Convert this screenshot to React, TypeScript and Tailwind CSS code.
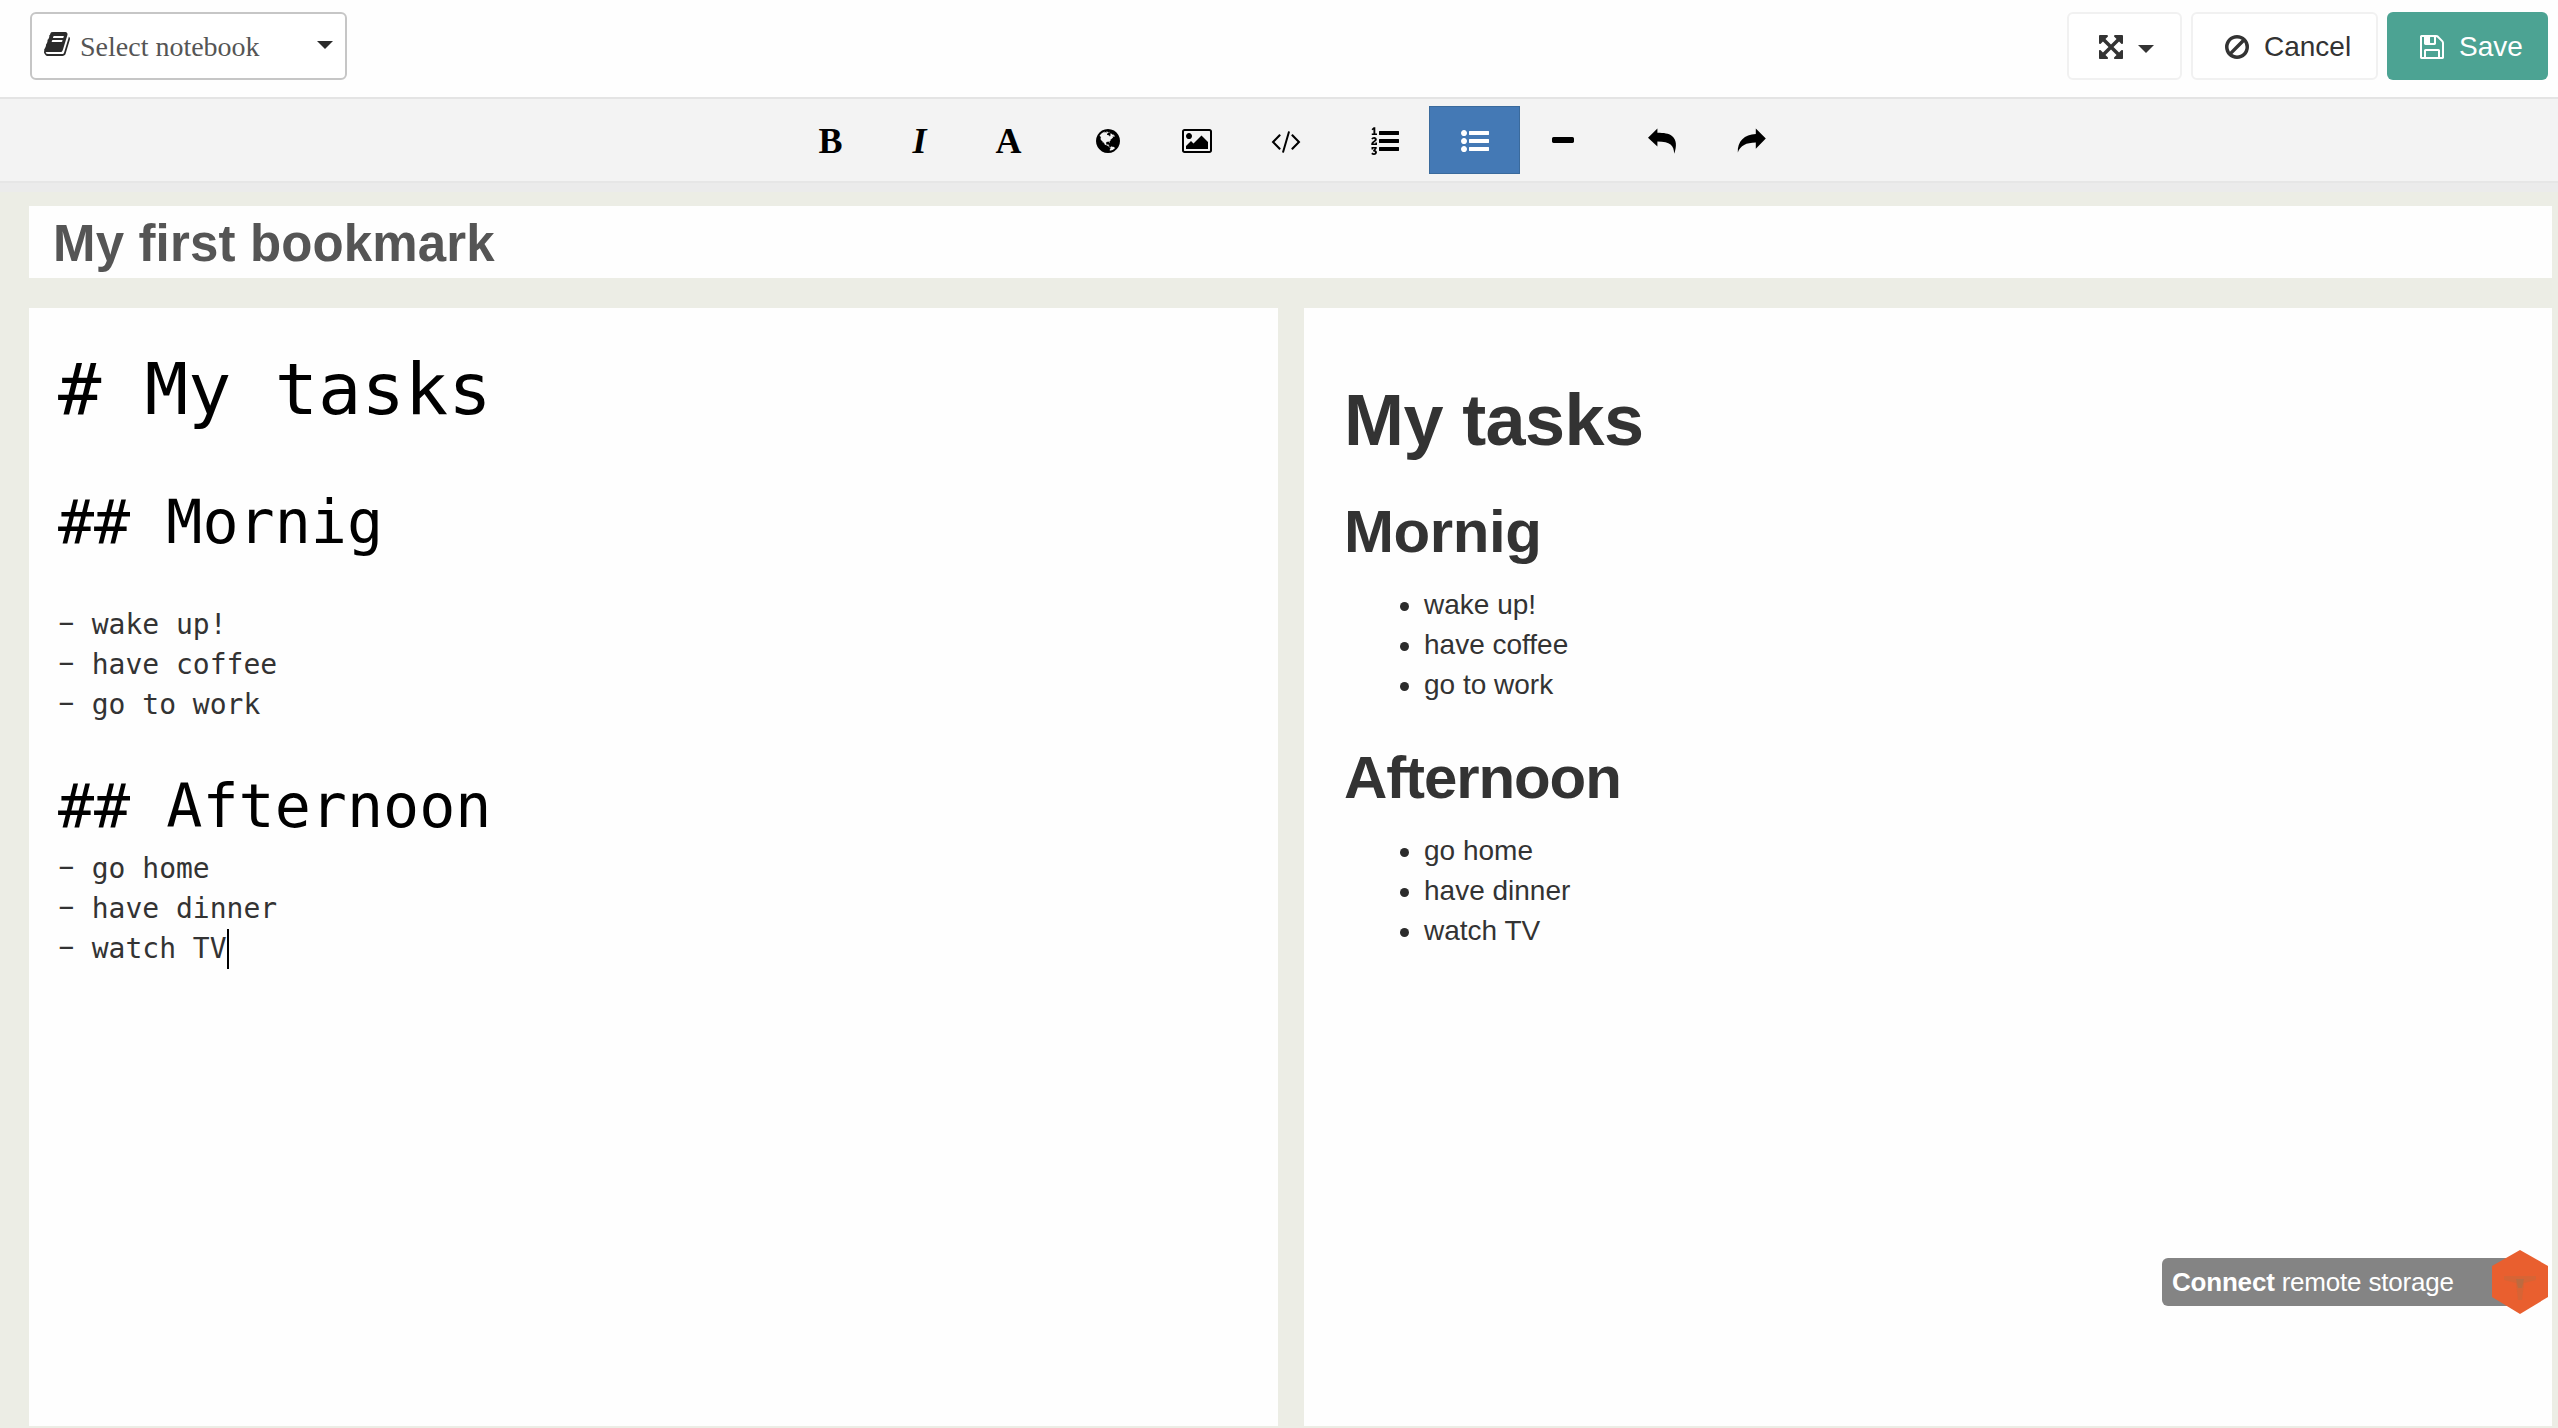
import React from "react";

type IconProps = { d: string; className?: string; viewBox?: string };

function Icon({ d, className = "h-7 w-7", viewBox = "0 0 1792 1792" }: IconProps) {
  return (
    <svg viewBox={viewBox} className={`shrink-0 ${className}`} fill="currentColor" aria-hidden="true">
      <path d={d} />
    </svg>
  );
}

const BOOK =
  "M1703 478q40 57 18 129l-275 906q-19 64-76.5 107.5t-122.5 43.5h-923q-77 0-148.5-53.5t-99.5-131.5q-24-67-2-127 0-4 3-27t4-37q1-8-3-21.5t-3-19.5q2-11 8-21t16.5-23.5 16.5-23.5q23-38 45-91.5t30-91.5q3-10 .5-30t-.5-28q3-11 17-28t17-23q21-36 42-92t25-90q1-9-2.5-32t.5-28q4-13 22-30.5t22-22.5q19-26 42.5-84.5t27.5-96.5q1-8-3-25.5t-2-26.5q2-8 9-18t18-23 17-21q8-12 16.5-30.5t15-35 16-36 19.5-32 26.5-23.5 36-11.5 47.5 5.5l-1 3q38-9 51-9h761q74 0 114 56t18 130l-274 906q-36 119-71.5 153.5t-128.5 34.5h-869q-27 0-38 15-11 16-1 43 24 70 144 70h923q29 0 56-15.5t35-41.5l300-987q7-22 5-57 38 15 59 43zm-1064 2q-4 13 2 22.5t20 9.5h608q13 0 25.5-9.5t16.5-22.5l21-64q4-13-2-22.5t-20-9.5h-608q-13 0-25.5 9.5t-16.5 22.5zm-83 256q-4 13 2 22.5t20 9.5h608q13 0 25.5-9.5t16.5-22.5l21-64q4-13-2-22.5t-20-9.5h-608q-13 0-25.5 9.5t-16.5 22.5z";
const ARROWS =
  "M1411 541l-355 355 355 355 144-144q29-31 70-14 39 17 39 59v448q0 26-19 45t-45 19h-448q-42 0-59-40-17-39 14-69l144-144-355-355-355 355 144 144q31 30 14 69-17 40-59 40h-448q-26 0-45-19t-19-45v-448q0-42 40-59 39-17 69 14l144 144 355-355-355-355-144 144q-19 19-45 19-12 0-24-5-40-17-40-59v-448q0-26 19-45t45-19h448q42 0 59 40 17 39-14 69l-144 144 355 355 355-355-144-144q-31-30-14-69 17-40 59-40h448q26 0 45 19t19 45v448q0 42-39 59-13 5-25 5-26 0-45-19z";
const BAN =
  "M1440 893q0-161-87-295l-754 753q137 89 297 89 111 0 211.5-43.5t173.5-116.5 116-174.5 43-212.5zm-999 299l755-754q-135-91-300-91-148 0-273 73t-198 199-73 274q0 162 89 299zm1223-299q0 157-61 300t-163.5 246-245 164-298.5 61-298.5-61-245-164-163.5-246-61-300 61-299.5 163.5-245.5 245-164 298.5-61 298.5 61 245 164 163.5 245.5 61 299.5z";
const FLOPPY =
  "M512 1536h768v-384h-768v384zm896 0h128v-896q0-14-10-38.5t-20-34.5l-281-281q-10-10-34-20t-39-10v416q0 40-28 68t-68 28h-576q-40 0-68-28t-28-68v-416h-128v1280h128v-416q0-40 28-68t68-28h832q40 0 68 28t28 68v416zm-384-928v-320q0-13-9.5-22.5t-22.5-9.5h-192q-13 0-22.5 9.5t-9.5 22.5v320q0 13 9.5 22.5t22.5 9.5h192q13 0 22.5-9.5t9.5-22.5zm640 32v928q0 40-28 68t-68 28h-1344q-40 0-68-28t-28-68v-1344q0-40 28-68t68-28h928q40 0 88 20t76 48l280 280q28 28 48 76t20 88z";
const GLOBE =
  "M896 128q209 0 385.5 103t279.5 279.5 103 385.5-103 385.5-279.5 279.5-385.5 103-385.5-103-279.5-279.5-103-385.5 103-385.5 279.5-279.5 385.5-103zm274 521q-2 1-9.5 9.5t-13.5 9.5q2 0 4.5-5t5-11 3.5-7q6-7 22-15 14-6 52-12 34-8 51 11-2-2 9.5-13t14.5-12q3-2 15-4.5t15-7.5l2-22q-12 1-17.5-7t-6.5-21q0 2-6 8 0-7-4.5-8t-11.5 1-9 1q-10-3-15-7.5t-8-16.5-4-15q-2-5-9.5-11t-9.5-10q-1-2-2.5-5.5t-3-6.5-4-5.5-5.5-2.5-7 5-7.5 10-4.5 5q-3-2-6-1.5t-4.5 1-4.5 3-5 3.5q-3 2-8.5 3t-8.5 2q15-5-1-11-10-4-16-3 9-4 7.5-12t-8.5-14h5q-1-4-8.5-8.5t-17.5-8.5-13-6q-8-5-34-9.5t-33-.5q-5 6-4.5 10.5t4 14 3.5 12.5q1 6-5.5 13t-6.5 12q0 7 14 15.5t10 21.5q-3 8-16 16t-16 12q-5 8-1.5 18.5t10.5 16.5q2 2 1.5 4t-3.5 4.5-5.5 4-6.5 3.5l-3 2q-11 5-20.5-6t-13.5-26q-7-25-16-30-23-8-29 1-5-13-41-26-25-9-58-4 6-1 0-15-7-15-19-12 3-6 4-17.5t1-13.5q3-13 12-23 1-1 7-8.5t9.5-13.5.5-6q35 4 50-11 5-5 11.5-17t10.5-17q9-6 14-5.5t14.5 5.5 14.5 5q14 1 15.5-11t-7.5-20q12 1 3-17-4-7-8-9-12-4-27 5-8 4 2 8-1-1-9.5 10.5t-16.5 17.5-16-5q-1-1-5.5-13.5t-9.5-13.5q-8 0-16 15 3-8-11-15t-24-8q19-12-8-27-7-4-20.5-5t-19.5 4q-5 7-5.5 11.5t5 8 10.5 5.5 11.5 4 8.5 3q14 10 8 14-2 1-8.5 3.5t-11.5 4.5-6 4q-3 4 0 14t-2 14q-5-5-9-17.5t-7-16.5q7 9-25 6l-10-1q-4 0-16 2t-20.5 1-13.5-8q-4-8 0-20 1-4 4-2-4-3-11-9.5t-10-8.5q-46 15-94 41 6 1 12-1 5-2 13-6.5t10-5.5q34-14 42-7l5-5q14 16 20 25-7-4-30-1-20 6-22 12 7 12 5 18-4-3-11.5-10t-14.5-11-15-5q-16 0-22 1-146 80-235 222 7 7 12 8 4 1 5 9t2.5 11 11.5-3q9 8 3 19 1-1 44 27 19 17 21 21 3 11-10 18-1-2-9-9t-9-4q-3 5 .5 18.5t10.5 12.5q-7 0-9.5 16t-2.5 35.5-1 23.5l2 1q-3 12 5.5 34.5t21.5 19.5q-13 3 20 43 6 8 8 9 3 2 12 7.5t15 10 10 10.5q4 5 10 22.5t14 23.5q-2 6 9.5 20t10.5 23q-1 0-2.5 1t-2.5 1q3 7 15.5 14t15.5 13q1 3 2 10t3 11 8 2q2-20-24-62-15-25-17-29-3-5-5.5-15.5t-4.5-14.5q2 0 6 1.5t8.5 3.5 7.5 4 2 3q-3 7 2 17.5t12 18.5 17 19 12 13q6 6 14 19.5t0 13.5q9 0 20 10t17 20q5 8 8 26t5 24q2 7 8.5 13.5t12.5 9.5l16 8 13 7q5 2 18.5 10.5t21.5 11.5q10 4 16 4t14.5-2.5 13.5-3.5q15-2 29 15t21 21q36 19 55 11-2 1 .5 7.5t8 15.5 9 14.5 5.5 8.5q5 6 18 15t18 15q6-4 7-9-3 8 7 20t18 10q14-3 14-32-31 15-49-18 0-1-2.5-5.5t-4-8.5-2.5-8.5 0-7.5 5-3q9 0 10-3.5t-2-12.5-4-13q-1-8-11-20t-12-15q-5 9-16 8t-16-9q0 1-1.5 5.5t-1.5 6.5q-13 0-15-1 1-3 2.5-17.5t3.5-22.5q1-4 5.5-12t7.5-14.5 4-12.5-4.5-9.5-17.5-2.5q-19 1-26 20-1 3-3 10.5t-5 11.5-9 7q-7 3-24 2t-24-5q-13-8-22.5-29t-9.5-37q0-10 2.5-26.5t3-25-5.5-24.5q3-2 9-9.5t10-10.5q2-1 4.5-1.5t4.5 0 4-1.5 3-6q-1-1-4-3-3-3-4-3 7 3 28.5-1.5t27.5 1.5q15 11 22-2 0-1-2.5-9.5t-.5-13.5q5 27 29 9 3 3 15.5 5t17.5 5q3 2 7 5.5t5.5 4.5 5-.5 8.5-6.5q10 14 12 24 11 40 19 44 7 3 11 2t4.5-9.5 0-14-1.5-12.5l-1-8v-18l-1-8q-15-3-18.5-12t1.5-18.5 15-18.5q1-1 8-3.5t15.5-6.5 12.5-8q21-19 15-35 7 0 11-9-1 0-5-3t-7.5-5-4.5-2q9-5 2-16 5-3 7.5-11t7.5-10q9 12 21 2 8-8 1-16 5-7 20.5-10.5t18.5-9.5q7 2 8-2t1-12 3-12q4-5 15-9t13-5l17-11q3-4 0-4 18 2 31-11 10-11-6-20 3-6-3-9.5t-15-5.5q3-1 11.5-.5t10.5-1.5q15-10-7-16-17-5-43 12zm-163 877q206-36 351-189-3-3-12.5-4.5t-12.5-3.5q-18-7-24-8 1-7-2.5-13t-8-9-12.5-8-11-7q-2-2-7-6t-7-5.5-7.5-4.5-8.5-2-10 1l-3 1q-3 1-5.5 2.5t-5.5 3-4 3 0 2.5q-21-17-36-22-5-1-11-5.5t-10.5-7-10-1.5-11.5 7q-5 5-6 15t-2 13q-7-5 0-17.5t2-18.5q-3-6-10.5-4.5t-12 4.5-11.5 8.5-9 6.5-8.5 5.5-8.5 7.5q-3 4-6 12t-5 11q-2-4-11.5-6.5t-9.5-5.5q2 10 4 35t5 38q7 31-12 48-27 25-29 40-4 22 12 26 0 7-8 20.5t-7 21.5q0 6 2 16z";
const IMAGE =
  "M576 576q0 80-56 136t-136 56-136-56-56-136 56-136 136-56 136 56 56 136zm1024 384v448h-1408v-192l320-320 160 160 512-512zm96-704h-1600q-13 0-22.5 9.5t-9.5 22.5v1216q0 13 9.5 22.5t22.5 9.5h1600q13 0 22.5-9.5t9.5-22.5v-1216q0-13-9.5-22.5t-22.5-9.5zm160 32v1216q0 66-47 113t-113 47h-1600q-66 0-113-47t-47-113v-1216q0-66 47-113t113-47h1600q66 0 113 47t47 113z";
const CODE =
  "M553 1399l-50 50q-10 10-23 10t-23-10l-466-466q-10-10-10-23t10-23l466-466q10-10 23-10t23 10l50 50q10 10 10 23t-10 23l-393 393 393 393q10 10 10 23t-10 23zm591-1067l-373 1291q-4 13-15.5 19.5t-23.5 2.5l-62-17q-13-4-19.5-15.5t-2.5-24.5l373-1291q4-13 15.5-19.5t23.5-2.5l62 17q13 4 19.5 15.5t2.5 24.5zm657 651l-466 466q-10 10-23 10t-23-10l-50-50q-10-10-10-23t10-23l393-393-393-393q-10-10-10-23t10-23l50-50q10-10 23-10t23 10l466 466q10 10 10 23t-10 23z";
const LIST_OL =
  "M381 1620q0 80-54.5 126t-135.5 46q-106 0-172-66l57-88q49 45 106 45 29 0 50.5-14.5t21.5-42.5q0-64-105-56l-26-56q8-10 32.5-43.5t42.5-54 37-38.5v-1q-16 0-48.5 1t-48.5 1v53h-106v-152h333v88l-95 115q51 12 81 49t30 88zm2-627v159h-362q-6-36-6-54 0-51 23.5-93t56.5-68 66-47.5 56.5-43.5 23.5-45q0-25-14.5-38.5t-39.5-13.5q-46 0-81 58l-85-59q24-51 71.5-79.5t105.5-28.5q73 0 123 41.5t50 112.5q0 50-34 91.5t-75 64.5-75.5 50.5-35.5 52.5h127v-60h105zm1409 319v192q0 13-9.5 22.5t-22.5 9.5h-1216q-13 0-22.5-9.5t-9.5-22.5v-192q0-14 9-23t23-9h1216q13 0 22.5 9.5t9.5 22.5zm-1408-899v99h-335v-99h107q0-41 .5-121.5t.5-121.5v-12h-2q-8 17-50 54l-71-76 136-127h106v404h108zm1408 387v192q0 13-9.5 22.5t-22.5 9.5h-1216q-13 0-22.5-9.5t-9.5-22.5v-192q0-14 9-23t23-9h1216q13 0 22.5 9.5t9.5 22.5zm0-512v192q0 13-9.5 22.5t-22.5 9.5h-1216q-13 0-22.5-9.5t-9.5-22.5v-192q0-13 9.5-22.5t22.5-9.5h1216q13 0 22.5 9.5t9.5 22.5z";
const LIST_UL =
  "M384 1408q0 80-56 136t-136 56-136-56-56-136 56-136 136-56 136 56 56 136zm0-512q0 80-56 136t-136 56-136-56-56-136 56-136 136-56 136 56 56 136zm1408 416v192q0 13-9.5 22.5t-22.5 9.5h-1216q-13 0-22.5-9.5t-9.5-22.5v-192q0-13 9.5-22.5t22.5-9.5h1216q13 0 22.5 9.5t9.5 22.5zm-1408-928q0 80-56 136t-136 56-136-56-56-136 56-136 136-56 136 56 56 136zm1408 416v192q0 13-9.5 22.5t-22.5 9.5h-1216q-13 0-22.5-9.5t-9.5-22.5v-192q0-13 9.5-22.5t22.5-9.5h1216q13 0 22.5 9.5t9.5 22.5zm0-512v192q0 13-9.5 22.5t-22.5 9.5h-1216q-13 0-22.5-9.5t-9.5-22.5v-192q0-13 9.5-22.5t22.5-9.5h1216q13 0 22.5 9.5t9.5 22.5z";
const MINUS =
  "M1600 736v192q0 40-28 68t-68 28h-1216q-40 0-68-28t-28-68v-192q0-40 28-68t68-28h1216q40 0 68 28t28 68z";
// Curved arrows on a 29 x 26 grid.
const UNDO =
  "M0 9.8L9.4 .4V4.8C16 4.8 20.5 5.4 24 8C28.6 11.6 29 18 26.2 25.8C25.8 17 22.5 13.6 9.4 13.4V18.6Z";
const REDO =
  "M28.8 10.6L18.8 .6V6C7.5 6.6 .2 13 .8 24.6C3.6 17.4 9 14.8 18.8 14.6V20.8Z";

function Caret({ className = "" }: { className?: string }) {
  return (
    <svg viewBox="0 0 16 8" className={`h-2 w-4 shrink-0 ${className}`} fill="currentColor" aria-hidden="true">
      <path d="M0 0H16L8 8Z" />
    </svg>
  );
}

function Tool({ children, active = false }: { children: React.ReactNode; active?: boolean }) {
  return (
    <button
      className={
        active
          ? "flex h-[68px] w-[91px] items-center justify-center border border-[#3a6a9c] bg-[#4479b5] pt-[2px] text-white"
          : "flex h-[68px] w-[89px] items-center justify-center pt-[2px] text-black"
      }
    >
      {children}
    </button>
  );
}

const letter = "font-['Liberation_Serif',serif] text-[36px] leading-[40px] font-bold";

function Header() {
  return (
    <header className="flex h-[97px] items-start justify-between bg-[#fefefe] pt-3 pr-2.5 pl-[30px]">
      <button className="flex h-[68px] w-[317px] items-center rounded-md border-2 border-[#c6c6c6] bg-white pr-[12px] pl-[11px] text-[#555]">
        <Icon d={BOOK} className="-mt-1 h-7 w-7 text-[#2b2b2b]" />
        <span className="ml-[9px] flex-1 pt-[2px] text-left font-['Liberation_Serif',serif] text-[28px] leading-[40px]">
          Select notebook
        </span>
        <Caret className="-mt-[2px] text-[#2b2b2b]" />
      </button>
      <div className="flex gap-[9px] text-[28px] leading-[40px] text-[#333]">
        <button className="flex h-[68px] w-[115px] items-center rounded-md border-2 border-[#f1f1f1] bg-white pt-[2px] pl-[28px]">
          <Icon d={ARROWS} className="h-7 w-7" />
          <Caret className="mt-[3px] ml-[13px]" />
        </button>
        <button className="flex h-[68px] w-[187px] items-center rounded-md border-2 border-[#f1f1f1] bg-white pt-[2px] pl-[30px]">
          <Icon d={BAN} className="h-7 w-7" />
          <span className="ml-[13px]">Cancel</span>
        </button>
        <button className="flex h-[68px] w-[161px] items-center rounded-md bg-[#4ca393] pt-[2px] pl-[31px] text-white">
          <Icon d={FLOPPY} className="h-7 w-7" />
          <span className="ml-[13px]">Save</span>
        </button>
      </div>
    </header>
  );
}

function Toolbar() {
  return (
    <div className="flex h-[86px] items-start gap-[10px] border-t-2 border-b-2 border-t-[#e4e4e4] border-b-[#e6e6e6] bg-[#f3f3f3] pt-[7px] pl-[786px]">
      <div className="flex">
        <Tool>
          <span className={letter}>B</span>
        </Tool>
        <Tool>
          <span className={`${letter} italic`}>I</span>
        </Tool>
        <Tool>
          <span className={letter}>A</span>
        </Tool>
      </div>
      <div className="flex">
        <Tool>
          <Icon d={GLOBE} />
        </Tool>
        <Tool>
          <Icon d={IMAGE} viewBox="-64 0 1920 1792" className="h-7 w-[30px]" />
        </Tool>
        <Tool>
          <Icon d={CODE} viewBox="-64 0 1920 1792" className="h-7 w-[30px]" />
        </Tool>
      </div>
      <div className="flex">
        <Tool>
          <Icon d={LIST_OL} />
        </Tool>
        <Tool active>
          <Icon d={LIST_UL} />
        </Tool>
        <Tool>
          <Icon d={MINUS} className="-ml-1 h-7 w-7" />
        </Tool>
      </div>
      <div className="-ml-px flex">
        <Tool>
          <Icon d={UNDO} viewBox="0 0 29 26" className="h-[26px] w-[29px]" />
        </Tool>
        <Tool>
          <Icon d={REDO} viewBox="0 0 29 26" className="h-[26px] w-[29px]" />
        </Tool>
      </div>
    </div>
  );
}

// One markdown list line; the dash is drawn as wide as the text cell.
function SourceItem({ text, cursor = false }: { text: string; cursor?: boolean }) {
  return (
    <div className="flex">
      <span className="relative -top-[2px] inline-block origin-center scale-x-[1.85]">-</span>
      <span> {text}</span>
      {cursor && <span className="h-10 w-[2px] bg-black" />}
    </div>
  );
}

function Editor() {
  return (
    <section className="h-[1118px] w-[1249px] bg-[#fefefe] pt-[30px] pl-[29px] font-['DejaVu_Sans_Mono',monospace] text-[28px] leading-[40px] whitespace-pre text-[#333]">
      <div className="h-[102px] text-[72px] leading-[102px] text-black"># My tasks</div>
      <div className="h-10" />
      <div className="h-[84px] text-[60px] leading-[84px] text-black">## Mornig</div>
      <div className="h-[41px]" />
      <SourceItem text="wake up!" />
      <SourceItem text="have coffee" />
      <SourceItem text="go to work" />
      <div className="h-[39px]" />
      <div className="h-[84px] text-[60px] leading-[84px] text-black">## Afternoon</div>
      <div className="pt-px">
        <SourceItem text="go home" />
        <SourceItem text="have dinner" />
        <SourceItem text="watch TV" cursor />
      </div>
    </section>
  );
}

function Items({ items }: { items: string[] }) {
  return (
    <ul className="pl-[56px] text-[28px] leading-[40px]">
      {items.map((item) => (
        <li key={item} className="flex items-center">
          <span className="mt-[3px] mr-[15px] h-[9px] w-[9px] rounded-full bg-[#2b2b2b]" />
          {item}
        </li>
      ))}
    </ul>
  );
}

function Preview() {
  return (
    <section className="h-[1118px] w-[1248px] bg-[#fefefe] pt-[72px] pl-[40px] text-[#333]">
      <h1 className="h-[80px] text-[72px] leading-[80px] font-bold tracking-[-0.6px]">My tasks</h1>
      <h2 className="mt-[39px] h-[66px] text-[60px] leading-[66px] font-bold tracking-[-0.4px]">Mornig</h2>
      <div className="mt-[20px]">
        <Items items={["wake up!", "have coffee", "go to work"]} />
      </div>
      <h2 className="mt-[40px] h-[66px] text-[60px] leading-[66px] font-bold tracking-[-1.1px]">Afternoon</h2>
      <div className="mt-[20px]">
        <Items items={["go home", "have dinner", "watch TV"]} />
      </div>
    </section>
  );
}

function StorageWidget() {
  return (
    <div className="absolute top-[1250px] left-[2162px] flex h-16 w-[386px] items-center">
      <div className="flex h-12 w-[358px] items-center rounded-l-md bg-[#848484] pl-[10px] text-[26px] leading-[40px] tracking-[-0.2px] whitespace-pre text-white">
        <b>Connect</b> remote storage
      </div>
      <svg viewBox="0 0 56 64" className="-ml-7 h-16 w-14 shrink-0" aria-hidden="true">
        <path d="M28 0L56 16V47L28 64L0 47V16Z" fill="#e95f2f" />
        <path d="M12 26H44V30L32 33L30 50H26L24 33L12 30Z" fill="#c9683b" opacity="0.55" />
        <path d="M24 29H32L30 38H26Z" fill="#a9704a" opacity="0.6" />
      </svg>
    </div>
  );
}

export default function App() {
  return (
    <div className="relative h-[1428px] w-[2558px] overflow-hidden bg-[#ecede5] font-['Liberation_Sans',Arial,sans-serif]">
      <Header />
      <Toolbar />
      <div className="h-[9px] bg-[#ebebeb]" />
      <main className="pt-[14px] pl-[29px]">
        <div className="flex h-[72px] w-[2523px] items-center bg-[#fefefe] pl-[24px]">
          <h1 className="pt-[3px] text-[51px] leading-[69px] font-bold tracking-[0.15px] text-[#555]">
            My first bookmark
          </h1>
        </div>
        <div className="mt-[30px] flex w-[2523px] justify-between">
          <Editor />
          <Preview />
        </div>
      </main>
      <StorageWidget />
    </div>
  );
}
